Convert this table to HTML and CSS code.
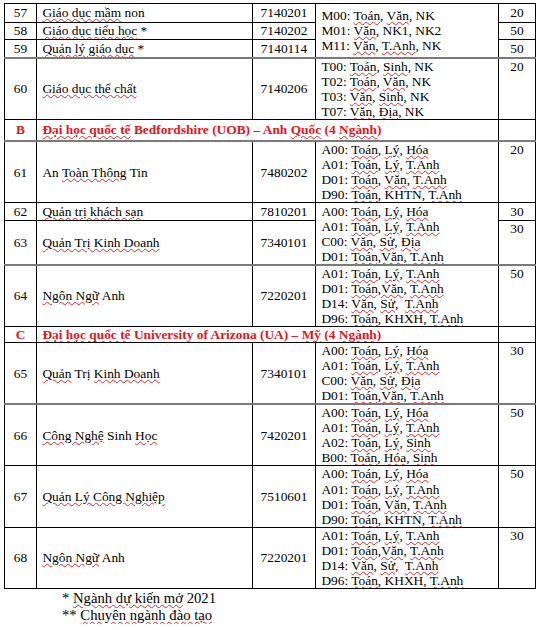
FILE: index.html
```html
<!DOCTYPE html>
<html lang="vi">
<head>
<meta charset="utf-8">
<title>Bảng ngành tuyển sinh</title>
<link rel="stylesheet" href="styles.css">
</head>
<body>
<table class="tbl">
  <colgroup>
    <col class="c1"><col class="c2"><col class="c3"><col class="c4"><col class="c5">
  </colgroup>
  <tbody>
    <tr class="h19">
      <td class="n">57</td>
      <td class="name"><span class="sp">Giáo dục mầm</span> non</td>
      <td class="code">7140201</td>
      <td class="comb" rowspan="3">
        <div>M00: <span class="sp">Toán</span>, <span class="sp">Văn</span>, NK</div>
        <div>M01: <span class="sp">Văn</span>, NK1, NK2</div>
        <div>M11: <span class="sp">Văn</span>, <span class="sp">T.Anh</span>, NK</div>
      </td>
      <td class="q mid">20</td>
    </tr>
    <tr class="h17">
      <td class="n">58</td>
      <td class="name"><span class="sp">Giáo dục tiểu học</span> *</td>
      <td class="code">7140202</td>
      <td class="q mid">50</td>
    </tr>
    <tr class="h18">
      <td class="n">59</td>
      <td class="name"><span class="sp">Quản lý giáo dục</span> *</td>
      <td class="code">7140114</td>
      <td class="q mid">50</td>
    </tr>
    <tr class="h62 gray">
      <td class="n">60</td>
      <td class="name"><span class="sp">Giáo dục thể chất</span></td>
      <td class="code">7140206</td>
      <td class="comb">
        <div>T00: <span class="sp">Toán</span>, <span class="sp">Sinh</span>, NK</div>
        <div>T02: <span class="sp">Toán</span>, <span class="sp">Văn</span>, NK</div>
        <div>T03: <span class="sp">Văn</span>, <span class="sp">Sinh</span>, NK</div>
        <div>T07: <span class="sp">Văn</span>, <span class="sp">Địa</span>, NK</div>
      </td>
      <td class="q">20</td>
    </tr>
    <tr class="h22 sec">
      <td class="n red">B</td>
      <td class="title" colspan="3"><span class="sp">Đại học quốc tế</span> Bedfordshire (UOB) – Anh <span class="sp">Quốc</span> (4 <span class="sp">Ngành</span>)</td>
      <td class="q"></td>
    </tr>
    <tr class="h62 gray">
      <td class="n">61</td>
      <td class="name">An <span class="sp">Toàn Thông</span> Tin</td>
      <td class="code">7480202</td>
      <td class="comb">
        <div>A00: <span class="sp">Toán</span>, <span class="sp">Lý</span>, <span class="sp">Hóa</span></div>
        <div>A01: <span class="sp">Toán</span>, <span class="sp">Lý</span>, <span class="sp">T.Anh</span></div>
        <div>D01: <span class="sp">Toán</span>, <span class="sp">Văn</span>, <span class="sp">T.Anh</span></div>
        <div>D90: <span class="sp">Toán</span>, KHTN, <span class="sp">T.Anh</span></div>
      </td>
      <td class="q">20</td>
    </tr>
    <tr class="h18">
      <td class="n">62</td>
      <td class="name"><span class="sp">Quản trị khách sạn</span></td>
      <td class="code">7810201</td>
      <td class="comb" rowspan="2">
        <div>A00: <span class="sp">Toán</span>, <span class="sp">Lý</span>, <span class="sp">Hóa</span></div>
        <div>A01: <span class="sp">Toán</span>, <span class="sp">Lý</span>, <span class="sp">T.Anh</span></div>
        <div>C00: <span class="sp">Văn</span>, <span class="sp">Sử</span>, <span class="sp">Địa</span></div>
        <div>D01: <span class="sp">Toán,Văn</span>, <span class="sp">T.Anh</span></div>
      </td>
      <td class="q mid">30</td>
    </tr>
    <tr class="h44">
      <td class="n">63</td>
      <td class="name"><span class="sp">Quản Trị Kinh Doanh</span></td>
      <td class="code">7340101</td>
      <td class="q">30</td>
    </tr>
    <tr class="h62 gray">
      <td class="n">64</td>
      <td class="name"><span class="sp">Ngôn Ngữ</span> Anh</td>
      <td class="code">7220201</td>
      <td class="comb">
        <div>A01: <span class="sp">Toán</span>, <span class="sp">Lý</span>, <span class="sp">T.Anh</span></div>
        <div>D01: <span class="sp">Toán,Văn</span>, <span class="sp">T.Anh</span></div>
        <div>D14: <span class="sp">Văn</span>, <span class="sp">Sử</span>,&nbsp; <span class="sp">T.Anh</span></div>
        <div>D96: <span class="sp">Toán</span>, KHXH, <span class="sp">T.Anh</span></div>
      </td>
      <td class="q">50</td>
    </tr>
    <tr class="h16 sec">
      <td class="n red">C</td>
      <td class="title" colspan="3"><span class="sp">Đại học quốc tế</span> University of Arizona (UA) – <span class="sp">Mỹ</span> (4 <span class="sp">Ngành</span>)</td>
      <td class="q"></td>
    </tr>
    <tr class="h62">
      <td class="n">65</td>
      <td class="name"><span class="sp">Quản</span> Trị <span class="sp">Kinh Doanh</span></td>
      <td class="code">7340101</td>
      <td class="comb">
        <div>A00: <span class="sp">Toán</span>, <span class="sp">Lý</span>, <span class="sp">Hóa</span></div>
        <div>A01: <span class="sp">Toán</span>, <span class="sp">Lý</span>, <span class="sp">T.Anh</span></div>
        <div>C00: <span class="sp">Văn</span>, <span class="sp">Sử</span>, <span class="sp">Địa</span></div>
        <div>D01: <span class="sp">Toán,Văn</span>, <span class="sp">T.Anh</span></div>
      </td>
      <td class="q">30</td>
    </tr>
    <tr class="h62 gray">
      <td class="n">66</td>
      <td class="name"><span class="sp">Công Nghệ</span> Sinh <span class="sp">Học</span></td>
      <td class="code">7420201</td>
      <td class="comb">
        <div>A00: <span class="sp">Toán</span>, <span class="sp">Lý</span>, <span class="sp">Hóa</span></div>
        <div>A01: <span class="sp">Toán</span>, <span class="sp">Lý</span>, <span class="sp">T.Anh</span></div>
        <div>A02: <span class="sp">Toán</span>, <span class="sp">Lý</span>, <span class="sp">Sinh</span></div>
        <div>B00: <span class="sp">Toán</span>, <span class="sp">Hóa</span>, <span class="sp">Sinh</span></div>
      </td>
      <td class="q">50</td>
    </tr>
    <tr class="h62">
      <td class="n">67</td>
      <td class="name"><span class="sp">Quản Lý Công Nghiệp</span></td>
      <td class="code">7510601</td>
      <td class="comb">
        <div>A00: <span class="sp">Toán</span>, <span class="sp">Lý</span>, <span class="sp">Hóa</span></div>
        <div>A01: <span class="sp">Toán</span>, <span class="sp">Lý</span>, <span class="sp">T.Anh</span></div>
        <div>D01: <span class="sp">Toán</span>, <span class="sp">Văn</span>, <span class="sp">T.Anh</span></div>
        <div>D90: <span class="sp">Toán</span>, KHTN, <span class="sp">T.Anh</span></div>
      </td>
      <td class="q">50</td>
    </tr>
    <tr class="h61">
      <td class="n">68</td>
      <td class="name"><span class="sp">Ngôn Ngữ</span> Anh</td>
      <td class="code">7220201</td>
      <td class="comb">
        <div>A01: <span class="sp">Toán</span>, <span class="sp">Lý</span>, <span class="sp">T.Anh</span></div>
        <div>D01: <span class="sp">Toán,Văn</span>, <span class="sp">T.Anh</span></div>
        <div>D14: <span class="sp">Văn</span>, <span class="sp">Sử</span>,&nbsp; <span class="sp">T.Anh</span></div>
        <div>D96: <span class="sp">Toán</span>, KHXH, <span class="sp">T.Anh</span></div>
      </td>
      <td class="q">30</td>
    </tr>
  </tbody>
</table>
<div class="notes">
  <div>* <span class="sp">Ngành dự kiến mở</span> 2021</div>
  <div>** <span class="sp">Chuyên ngành đào tạo</span></div>
</div>
</body>
</html>
```

FILE: styles.css
```css
html, body {
  margin: 0;
  padding: 0;
  background: #fff;
}

body {
  font-family: "Liberation Serif", "Times New Roman", serif;
  color: #000;
}

.tbl {
  margin: 3px 0 0 4px;
  width: 531px;
  table-layout: fixed;
  border-collapse: collapse;
  font-size: 13.4px;
  line-height: 15.05px;
}

.c1 { width: 32px; }
.c2 { width: 216px; }
.c3 { width: 63px; }
.c4 { width: 183px; }
.c5 { width: 37px; }

.tbl td {
  border: 1px solid #000;
  padding: 0 5.4px;
  vertical-align: middle;
  white-space: nowrap;
  overflow: hidden;
}

.tbl tr.gray td {
  border-top: 2px solid #7a7a7a;
}

.h16 { height: 16px; }
.h17 { height: 17px; }
.h18 { height: 18px; }
.h19 { height: 19px; }
.h22 { height: 22px; }
.h44 { height: 44px; }
.h61 { height: 61px; }
.h62 { height: 61px; }

.tbl td.n {
  text-align: center;
  padding: 0;
}

.tbl td.code {
  text-align: center;
  padding: 0;
}

.tbl td.q {
  text-align: center;
  vertical-align: top;
  padding: 0;
}

.tbl td.q.mid {
  vertical-align: middle;
}

.tbl td.comb {
  vertical-align: middle;
}

.red {
  color: #e8141a;
  font-weight: bold;
}

.tbl td.title {
  color: #e8141a;
  font-weight: bold;
}

.sp {
  text-decoration-line: underline;
  text-decoration-style: wavy;
  text-decoration-color: #e8262a;
  text-decoration-thickness: 1px;
  text-underline-offset: 1px;
}

.notes {
  margin-left: 62px;
  font-size: 14.7px;
  line-height: 17px;
  padding-top: 1px;
}
```
